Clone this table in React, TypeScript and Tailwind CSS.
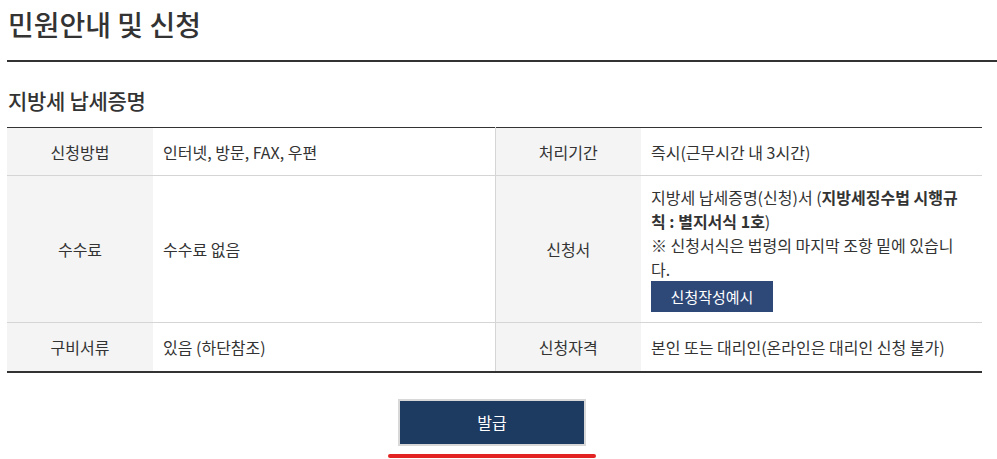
export default function App() {
    const th = 'bg-[#f4f4f4] text-center font-normal align-middle';
    const td = 'pl-[10px] pr-[6px] align-middle';

    return (
        <div className="min-h-screen bg-white pl-[7px] text-[16px] text-[#333] font-['Noto_Sans_CJK_KR','Noto_Sans',sans-serif]">
            {/* page title */}
            <h1 className="w-[990px] border-b-2 border-[#333] pt-[6px] pb-[18px] pl-px text-[28px] leading-[36px] font-medium">
                민원안내 및 신청
            </h1>

            <div className="w-[975px]">
                <h2 className="mt-[23px] mb-[12px] pl-px text-[21px] leading-[30px] font-medium tracking-[-0.3px]">
                    지방세 납세증명
                </h2>

                {/* info table */}
                <table className="w-full table-fixed border-collapse border-t border-b-2 border-t-[#333] border-b-[#333] leading-[24px]">
                    <colgroup>
                        <col className="w-[146px]" />
                        <col className="w-[342px]" />
                        <col className="w-[146px]" />
                        <col />
                    </colgroup>
                    <tbody>
                        <tr className="h-[48px] border-b border-[#d5d5d5]">
                            <th className={th}>신청방법</th>
                            <td className={td}>인터넷, 방문, FAX, 우편</td>
                            <th className={`${th} border-l border-[#d5d5d5]`}>처리기간</th>
                            <td className={td}>즉시(근무시간 내 3시간)</td>
                        </tr>
                        <tr className="border-b border-[#d5d5d5]">
                            <th className={th}>수수료</th>
                            <td className={td}>수수료 없음</td>
                            <th className={`${th} border-l border-[#d5d5d5]`}>신청서</th>
                            <td className={`${td} pt-[9px] pb-[10px] whitespace-nowrap`}>
                                <p>
                                    지방세 납세증명(신청)서 (<b className="font-bold">지방세징수법 시행규</b>
                                </p>
                                <p>
                                    <b className="font-bold">칙 : 별지서식 1호</b>)
                                </p>
                                <p>※ 신청서식은 법령의 마지막 조항 밑에 있습니</p>
                                <p>다.</p>
                                <button className="flex h-[31px] w-[122px] items-center justify-center bg-[#2e4878] text-[15px] text-white">
                                    신청작성예시
                                </button>
                            </td>
                        </tr>
                        <tr className="h-[49px] border-b border-[#d5d5d5]">
                            <th className={th}>구비서류</th>
                            <td className={td}>있음 (하단참조)</td>
                            <th className={`${th} border-l border-[#d5d5d5]`}>신청자격</th>
                            <td className={td}>본인 또는 대리인(온라인은 대리인 신청 불가)</td>
                        </tr>
                    </tbody>
                </table>

                {/* issue button */}
                <div className="mt-[26px] flex w-[970px] flex-col items-center">
                    <button className="h-[47px] w-[188px] border-2 border-[#d8d8d8] bg-[#1d3a60] text-[16px] text-white">
                        발급
                    </button>
                    <div className="mt-[8px] h-[4px] w-[208px] rounded-full bg-[#e32222]" />
                </div>
            </div>
        </div>
    );
}
